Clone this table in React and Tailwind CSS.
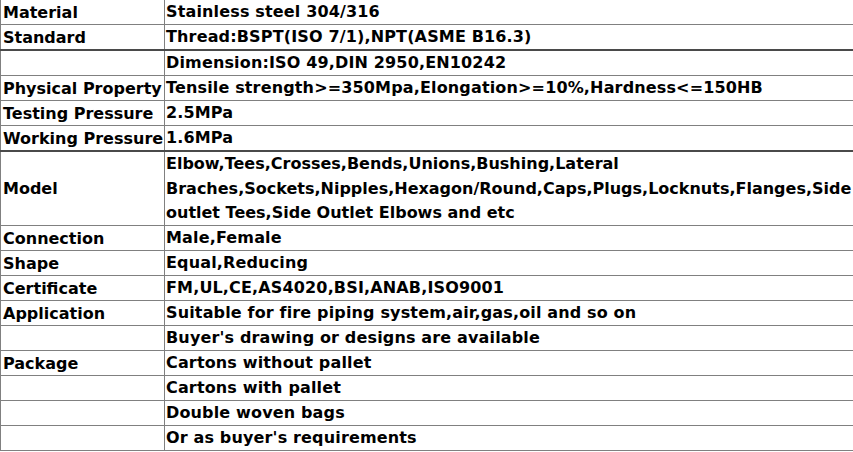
import React from 'react';

const rows = [
  { label: 'Material', value: ['Stainless steel 304/316'] },
  { label: 'Standard', value: ['Thread:BSPT(ISO 7/1),NPT(ASME B16.3)'], thick: true },
  { label: '', value: ['Dimension:ISO 49,DIN 2950,EN10242'] },
  { label: 'Physical Property', value: ['Tensile strength>=350Mpa,Elongation>=10%,Hardness<=150HB'] },
  { label: 'Testing Pressure', value: ['2.5MPa'] },
  { label: 'Working Pressure', value: ['1.6MPa'], thick: true },
  {
    label: 'Model',
    value: [
      'Elbow,Tees,Crosses,Bends,Unions,Bushing,Lateral',
      'Braches,Sockets,Nipples,Hexagon/Round,Caps,Plugs,Locknuts,Flanges,Side',
      'outlet Tees,Side Outlet Elbows and etc',
    ],
    tall: true,
  },
  { label: 'Connection', value: ['Male,Female'] },
  { label: 'Shape', value: ['Equal,Reducing'] },
  { label: 'Certificate', value: ['FM,UL,CE,AS4020,BSI,ANAB,ISO9001'] },
  { label: 'Application', value: ['Suitable for fire piping system,air,gas,oil and so on'] },
  { label: '', value: ["Buyer's drawing or designs are available"] },
  { label: 'Package', value: ['Cartons without pallet'] },
  { label: '', value: ['Cartons with pallet'] },
  { label: '', value: ['Double woven bags'] },
  { label: '', value: ["Or as buyer's requirements"] },
];

function Row({ row }) {
  const border = row.thick
    ? 'border-b-2 border-b-[#4a4a4a]'
    : 'border-b border-b-[#808080]';
  const height = row.tall ? 'h-[73px]' : 'h-[24px]';
  const tracking = row.tall ? 'tracking-normal' : 'tracking-[0.15px]';
  return (
    <div className={`flex box-content ${height} ${border}`}>
      <div className="w-[165px] shrink-0 border-l border-r border-[#808080] pl-[2px] pt-[1px] flex items-center">
        <span className="whitespace-nowrap">{row.label}</span>
      </div>
      <div className={`flex-1 min-w-0 pl-[1px] pt-[1px] flex flex-col justify-center ${tracking}`}>
        {row.value.map((line) => (
          <div key={line} className="whitespace-nowrap leading-[24.5px]">
            {line}
          </div>
        ))}
      </div>
    </div>
  );
}

export default function App() {
  return (
    <div
      className="w-[853px] h-[452px] overflow-hidden bg-white text-black font-bold text-[16px] leading-[24px]"
      style={{ fontFamily: '"DejaVu Sans", Verdana, sans-serif' }}
    >
      {rows.map((row, i) => (
        <Row key={i} row={row} />
      ))}
    </div>
  );
}
